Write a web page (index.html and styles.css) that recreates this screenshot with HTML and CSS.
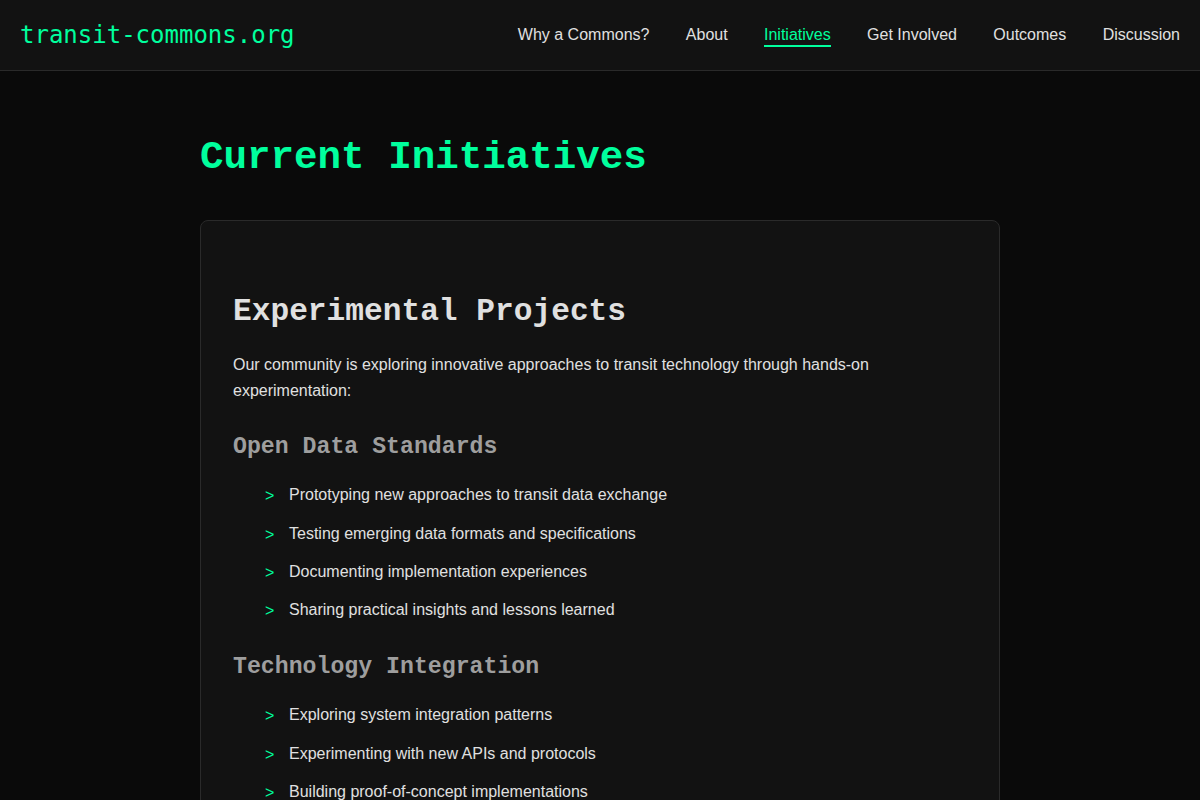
FILE: index.html
```html
<!DOCTYPE html>
<html lang="en">
<head>
<meta charset="utf-8">
<title>Initiatives - transit-commons.org</title>
<link rel="stylesheet" href="styles.css">
</head>
<body>
<header class="site-header">
  <a class="logo" href="#">transit-commons.org</a>
  <nav class="nav">
    <a href="#">Why a Commons?</a>
    <a href="#">About</a>
    <a href="#" class="active">Initiatives</a>
    <a href="#">Get Involved</a>
    <a href="#">Outcomes</a>
    <a href="#">Discussion</a>
  </nav>
</header>
<main class="main">
  <h1 class="page-title">Current Initiatives</h1>
  <section class="card">
    <h2>Experimental Projects</h2>
    <p>Our community is exploring innovative approaches to transit technology through hands-on experimentation:</p>
    <h3>Open Data Standards</h3>
    <ul class="arrow-list">
      <li>Prototyping new approaches to transit data exchange</li>
      <li>Testing emerging data formats and specifications</li>
      <li>Documenting implementation experiences</li>
      <li>Sharing practical insights and lessons learned</li>
    </ul>
    <h3>Technology Integration</h3>
    <ul class="arrow-list">
      <li>Exploring system integration patterns</li>
      <li>Experimenting with new APIs and protocols</li>
      <li>Building proof-of-concept implementations</li>
      <li>Evaluating emerging transit technologies</li>
    </ul>
  </section>
</main>
</body>
</html>
```

FILE: styles.css
```css
* { box-sizing: border-box; }

html, body {
  margin: 0;
  padding: 0;
}

body {
  background: #0a0a0a;
  color: #e0e0e0;
  font-family: "Liberation Sans", Arial, sans-serif;
  font-size: 16px;
  line-height: 1.6;
}

.site-header {
  display: flex;
  align-items: center;
  justify-content: space-between;
  height: 71px;
  padding: 0 20px;
  background: #121212;
  border-bottom: 1px solid #2a2a2a;
}

.logo {
  font-family: "DejaVu Sans Mono", monospace;
  font-size: 24px;
  color: #00ff9d;
  text-decoration: none;
  line-height: 1;
}

.nav {
  display: flex;
  gap: 36.4px;
  padding-top: 2px;
}

.nav a {
  color: #e0e0e0;
  text-decoration: none;
  font-size: 16px;
  line-height: 1.2;
  padding-bottom: 1px;
  border-bottom: 2px solid transparent;
}

.nav a.active {
  color: #00ff9d;
  border-bottom-color: #00ff9d;
}

.main {
  max-width: 800px;
  margin: 0 auto;
  padding: 63px 0 40px;
}

.page-title {
  font-family: "Liberation Mono", monospace;
  font-weight: bold;
  font-size: 39.2px;
  color: #00ff9d;
  margin: 0 0 39px;
  line-height: 1.2;
}

.card {
  background: #121212;
  border: 1px solid #2a2a2a;
  border-radius: 8px;
  padding: 32px;
}

.card h2 {
  font-family: "Liberation Mono", monospace;
  font-size: 31.2px;
  color: #e0e0e0;
  margin: 34px 0 15px;
  line-height: 1.6;
}

.card p {
  margin: 0 0 16px;
}

.card h3 {
  font-family: "Liberation Mono", monospace;
  font-size: 23.2px;
  color: #9e9e9e;
  margin: 26px 0 16px;
  line-height: 1.6;
}

.card .arrow-list + h3 {
  margin-top: 26px;
}

.arrow-list {
  list-style: none;
  margin: 0;
  padding: 0;
}

.arrow-list li {
  position: relative;
  padding-left: 56px;
}

.arrow-list li + li {
  margin-top: 12.8px;
}

.arrow-list li::before {
  content: ">";
  position: absolute;
  left: 32px;
  top: 1px;
  color: #00ff9d;
}
```
